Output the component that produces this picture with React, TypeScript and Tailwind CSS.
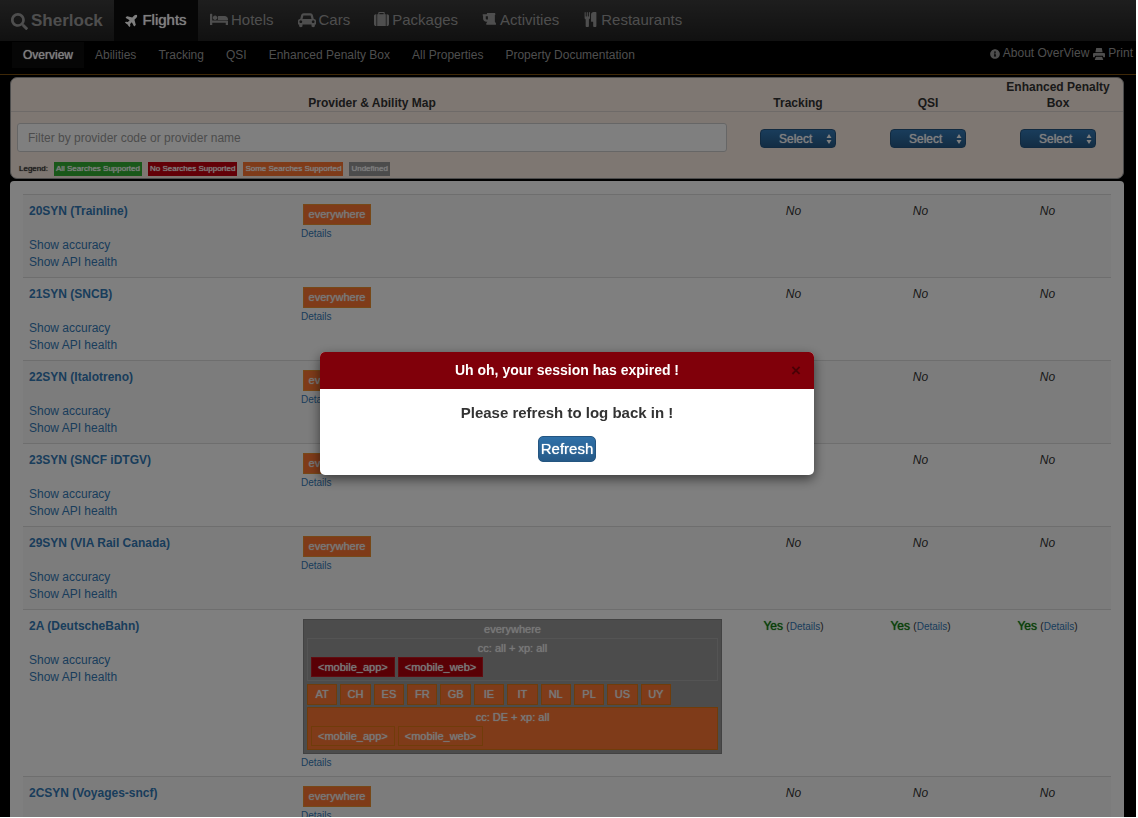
import type { ReactNode } from "react";
import { FaSearch, FaPlane, FaInfoCircle } from "react-icons/fa";

function Glyph({ d, wide = false, className }: { d: string; wide?: boolean; className: string }) {
  return (
    <svg viewBox={wide ? "0 0 2048 1792" : "0 0 1792 1792"} className={className} fill="currentColor" aria-hidden="true">
      <path d={d} fillRule="evenodd" />
    </svg>
  );
}

const bedPath =
  "M256 960h1728q26 0 45 19t19 45v448h-256v-256h-1536v256h-256v-1216q0-26 19-45t45-19h128q26 0 45 19t19 45v704zm576-320q0-106-75-181t-181-75-181 75-75 181 75 181 181 75 181-75 75-181zm1216 256v-64q0-159-112.5-271.5t-271.5-112.5h-704q-26 0-45 19t-19 45v384h1152z";
const carPath =
  "M480 1088q0-66-47-113t-113-47-113 47-47 113 47 113 113 47 113-47 47-113zm36-320h1016l-89-357q-2-8-14-17.5t-21-9.5h-768q-9 0-21 9.5t-14 17.5zm1372 320q0-66-47-113t-113-47-113 47-47 113 47 113 113 47 113-47 47-113zm160-96v384q0 14-9 23t-23 9h-96v128q0 80-56 136t-136 56-136-56-56-136v-128h-1024v128q0 80-56 136t-136 56-136-56-56-136v-128h-96q-14 0-23-9t-9-23v-384q0-93 65.5-158.5t158.5-65.5h28l105-419q23-94 104-157.5t179-63.5h768q98 0 179 63.5t104 157.5l105 419h28q93 0 158.5 65.5t65.5 158.5z";
const suitcasePath =
  "M640 256h512v-128h-512v128zm-352 0v1408h-64q-92 0-158-66t-66-158v-960q0-92 66-158t158-66h64zm1120 0v1408h-1024v-1408h128v-160q0-40 28-68t68-28h576q40 0 68 28t28 68v160h128zm384 224v960q0 92-66 158t-158 66h-64v-1408h64q92 0 158 66t66 158z";
const beerPath =
  "M704 896v-384h-256v256q0 53 37.5 90.5t90.5 37.5h128zM1664 1344v192h-1152v-192l128-192h-128q-159 0-271.5-112.5t-112.5-271.5v-320l-64-64 32-128h480l32-128h960l32 192-64 32v800z";
const cutleryPath =
  "M832 64v640q0 61-35.5 111t-92.5 70v779q0 52-38 90t-90 38h-128q-52 0-90-38t-38-90v-779q-57-20-92.5-70t-35.5-111v-640q0-26 19-45t45-19 45 19 19 45v416q0 26 19 45t45 19 45-19 19-45v-416q0-26 19-45t45-19 45 19 19 45v416q0 26 19 45t45 19 45-19 19-45v-416q0-26 19-45t45-19 45 19 19 45zM1600 64v1600q0 52-38 90t-90 38h-128q-52 0-90-38t-38-90v-512h-224q-13 0-22.5-9.5t-9.5-22.5v-800q0-132 94-226t226-94h256q26 0 45 19t19 45z";

const navItems: { label: string; icon: ReactNode }[] = [
  { label: "Hotels", icon: <Glyph wide d={bedPath} className="h-4 w-[18px]" /> },
  { label: "Cars", icon: <Glyph wide d={carPath} className="h-4 w-[18px]" /> },
  { label: "Packages", icon: <Glyph d={suitcasePath} className="size-[15px]" /> },
  { label: "Activities", icon: <Glyph d={beerPath} className="size-[15px]" /> },
  { label: "Restaurants", icon: <Glyph d={cutleryPath} className="size-[15px]" /> },
];

const subItems = ["Abilities", "Tracking", "QSI", "Enhanced Penalty Box", "All Properties", "Property Documentation"];

const filters = ["Tracking", "QSI", "Enhanced Penalty Box"];

const legend = [
  { label: "All Searches Supported", color: "bg-[#33b133]" },
  { label: "No Searches Supported", color: "bg-[#c6000e]" },
  { label: "Some Searches Supported", color: "bg-[#ff7733]" },
  { label: "Undefined", color: "bg-[#999999]" },
];

const countries = ["AT", "CH", "ES", "FR", "GB", "IE", "IT", "NL", "PL", "US", "UY"];

const providers = [
  { name: "20SYN (Trainline)" },
  { name: "21SYN (SNCB)" },
  { name: "22SYN (Italotreno)" },
  { name: "23SYN (SNCF iDTGV)" },
  { name: "29SYN (VIA Rail Canada)" },
  { name: "2A (DeutscheBahn)", mapped: true },
  { name: "2CSYN (Voyages-sncf)" },
];

function Chip({ label, red = false }: { label: string; red?: boolean }) {
  return (
    <span
      className={
        red
          ? "border border-[#c01a22] bg-[#b3000a] px-[6px] leading-[18px]"
          : "border border-[#e07814] bg-[#ff7733] px-[6px] leading-[18px]"
      }
    >
      {label}
    </span>
  );
}

function CoverageMap() {
  return (
    <div className="ml-[2px] w-[419px] border border-[#858585] bg-[#999] px-[3px] pb-[3px] text-center text-[11px] text-[#f0f0f0] [text-shadow:0_0_1px_#f0f0f0]">
      <div className="leading-[18px]">everywhere</div>
      <div className="mb-[3px] border border-[#a8a8a8] px-[3px] pb-[3px]">
        <div className="leading-[18px]">cc: all + xp: all</div>
        <div className="flex gap-[3px]">
          <Chip label="<mobile_app>" red />
          <Chip label="<mobile_web>" red />
        </div>
      </div>
      <div className="mb-[2px] flex w-[364px] gap-[3px]">
        {countries.map((c) => (
          <span key={c} className="flex-1 border border-[#e07814] bg-[#ff7733] leading-[19px]">
            {c}
          </span>
        ))}
      </div>
      <div className="border border-[#e07814] bg-[#ff7733] px-[3px] pb-[3px]">
        <div className="leading-[18px]">cc: DE + xp: all</div>
        <div className="flex gap-[3px]">
          <Chip label="<mobile_app>" />
          <Chip label="<mobile_web>" />
        </div>
      </div>
    </div>
  );
}

function SessionDialog() {
  return (
    <div className="fixed bottom-px left-0 right-[2px] top-0 flex items-start justify-center bg-black/50 pr-[2px]">
      <div
        role="dialog"
        aria-modal="true"
        aria-labelledby="session-title"
        className="mt-[352px] w-[494px] overflow-hidden rounded-[5px] bg-white text-center shadow-[0_4px_12px_rgba(0,0,0,0.55)]"
      >
        <div className="flex h-[37px] items-center bg-[#80000a] px-3">
          <h2 id="session-title" className="flex-1 pl-3 text-[14px] font-bold text-white">
            Uh oh, your session has expired !
          </h2>
          <button type="button" aria-label="Close" className="w-3 text-[17px] font-bold leading-none text-[#4a0006]">
            ×
          </button>
        </div>
        <div className="flex flex-col items-center pb-[13px] pt-[14px]">
          <p className="text-[15px] font-bold leading-5 text-[#333]">Please refresh to log back in !</p>
          <button
            type="button"
            className="mt-[13px] h-[26px] rounded-[5px] border border-[#245580] bg-linear-to-b from-[#2f70a8] to-[#265a88] px-[2px] text-[15px] leading-6 text-white [text-shadow:0_0_1px_#fff]"
          >
            Refresh
          </button>
        </div>
      </div>
    </div>
  );
}

export default function App() {
  return (
    <div className="h-screen overflow-hidden border-b border-r-2 border-white bg-black font-['Liberation_Sans',Arial,sans-serif] text-xs text-[#333]">
      <nav className="flex h-[41px] items-stretch bg-linear-to-b from-[#3c3c3c] to-[#222] text-[15px] text-[#9d9d9d]">
        <a href="#" className="flex w-[114px] items-center gap-[3px] pl-[11px] pt-[2px] text-[17px] font-bold">
          <FaSearch className="size-[17px]" />
          Sherlock
        </a>
        <a href="#" className="flex w-[84px] items-center justify-center gap-[3px] bg-[#0c0c0c] pb-[2px] text-white [text-shadow:0_0_1px_#fff]">
          <FaPlane className="size-[14px] -rotate-45" />
          Flights
        </a>
        {navItems.map((item) => (
          <a key={item.label} href="#" className="flex items-center gap-[3px] px-3 pb-[2px]">
            {item.icon}
            {item.label}
          </a>
        ))}
      </nav>

      <div className="flex h-[34px] items-start justify-between border-b border-[#7d5010] text-[#9d9d9d]">
        <div className="flex pl-3 pt-[1px]">
          <a href="#" className="bg-[#0c0c0c] px-[11px] leading-[26px] text-white [text-shadow:0_0_1px_#fff]">
            Overview
          </a>
          {subItems.map((s) => (
            <a key={s} href="#" className="px-[11px] leading-[26px]">
              {s}
            </a>
          ))}
        </div>
        <div className="flex items-center gap-1 pr-[3px] leading-[25px]">
          <a href="#" className="flex items-center gap-[3px]">
            <FaInfoCircle className="size-[10px]" />
            About OverView
          </a>
          <a href="#" className="flex items-center gap-[3px]">
            <svg viewBox="0 0 12 12" className="size-3" fill="currentColor" aria-hidden="true">
              <path d="M3.2 0h5.6l.8 4.2H2.4ZM1 5h10a1 1 0 0 1 1 1v3.2h-1.6l-.6-1.4H2.2l-.6 1.4H0V6a1 1 0 0 1 1-1ZM2.9 8.8h6.2l1.2 3.2H1.7Z" />
            </svg>
            Print
          </a>
        </div>
      </div>

      <div className="ml-[10px] mr-3 mt-[2px]">
        <section className="h-[102px] overflow-hidden rounded-[7px] border border-[#999] bg-[#fdeee4]">
          <div className="flex h-[34px] items-end border-b border-[#ddd5d0] text-center font-bold leading-4">
            <div className="flex-1">Provider &amp; Ability Map</div>
            {filters.map((f) => (
              <div key={f} className="w-[130px] px-3">
                {f}
              </div>
            ))}
          </div>
          <div className="flex">
            <div className="flex-1 px-[6px] pt-[11px]">
              <input
                aria-label="Filter providers"
                placeholder="Filter by provider code or provider name"
                className="h-[29px] w-full rounded-[3px] border border-[#ccc] bg-white px-[10px] text-xs placeholder:text-[#999]"
              />
              <div className="mt-[10px] flex items-center gap-[6px] pl-[2px] text-[8px] leading-[14px] text-white [text-shadow:0_0_1px_currentColor]">
                <span className="text-[#333]">Legend:</span>
                {legend.map((l) => (
                  <span key={l.label} className={`px-[2px] ${l.color}`}>
                    {l.label}
                  </span>
                ))}
              </div>
            </div>
            {filters.map((f) => (
              <div key={f} className="flex w-[130px] justify-center pt-[17px]">
                <div className="relative h-[19px] w-[76px]">
                  <select
                    aria-label={f}
                    className="h-full w-full appearance-none rounded-[4px] border border-[#245580] bg-linear-to-b from-[#337ab7] to-[#265a88] pl-[18px] text-xs leading-none text-white [text-shadow:0_0_1px_#fff]"
                  >
                    <option>Select</option>
                  </select>
                  <svg viewBox="0 0 6 10" className="pointer-events-none absolute right-1 top-[5px] h-[10px] w-[6px] fill-white">
                    <path d="M3 0 5.5 4H.5ZM3 10 .5 6h5Z" />
                  </svg>
                </div>
              </div>
            ))}
          </div>
        </section>

        <main className="mt-[2px] rounded-t-[4px] bg-white px-[13px] pt-[13px]">
          <table className="w-full table-fixed border-collapse">
            <colgroup>
              <col className="w-[272px]" />
              <col />
              <col className="w-[127px]" />
              <col className="w-[127px]" />
              <col className="w-[127px]" />
            </colgroup>
            <tbody>
              {providers.map((p) => (
                <tr key={p.name} className="border-t border-[#ddd] align-top odd:bg-[#f9f9f9]">
                  <td className="px-[6px] pb-[6px] pt-2 leading-[17px] text-[#337ab7]">
                    <a href="#" className="mb-[17px] block font-bold">
                      {p.name}
                    </a>
                    <a href="#" className="block">Show accuracy</a>
                    <a href="#" className="block">Show API health</a>
                  </td>
                  <td className="px-[6px] pb-[5px] pt-[9px]">
                    {p.mapped ? (
                      <CoverageMap />
                    ) : (
                      <span className="ml-[2px] block w-[68px] border border-[#ee9030] bg-[#ff7733] text-center text-[11px] leading-[19px] text-[#f0f0f0] [text-shadow:0_0_1px_#f0f0f0]">
                        everywhere
                      </span>
                    )}
                    <a href="#" className="block text-[10px] leading-[17px] text-[#337ab7]">
                      Details
                    </a>
                  </td>
                  {filters.map((f) => (
                    <td key={f} className="pt-2 text-center leading-[17px]">
                      {p.mapped ? (
                        <>
                          <span className="text-[#118011] [text-shadow:0_0_1px_#118011]">Yes</span>{" "}
                          <span className="text-[10px]">
                            (<a href="#" className="text-[#337ab7]">Details</a>)
                          </span>
                        </>
                      ) : (
                        <em>No</em>
                      )}
                    </td>
                  ))}
                </tr>
              ))}
            </tbody>
          </table>
        </main>
      </div>
      <SessionDialog />
    </div>
  );
}
